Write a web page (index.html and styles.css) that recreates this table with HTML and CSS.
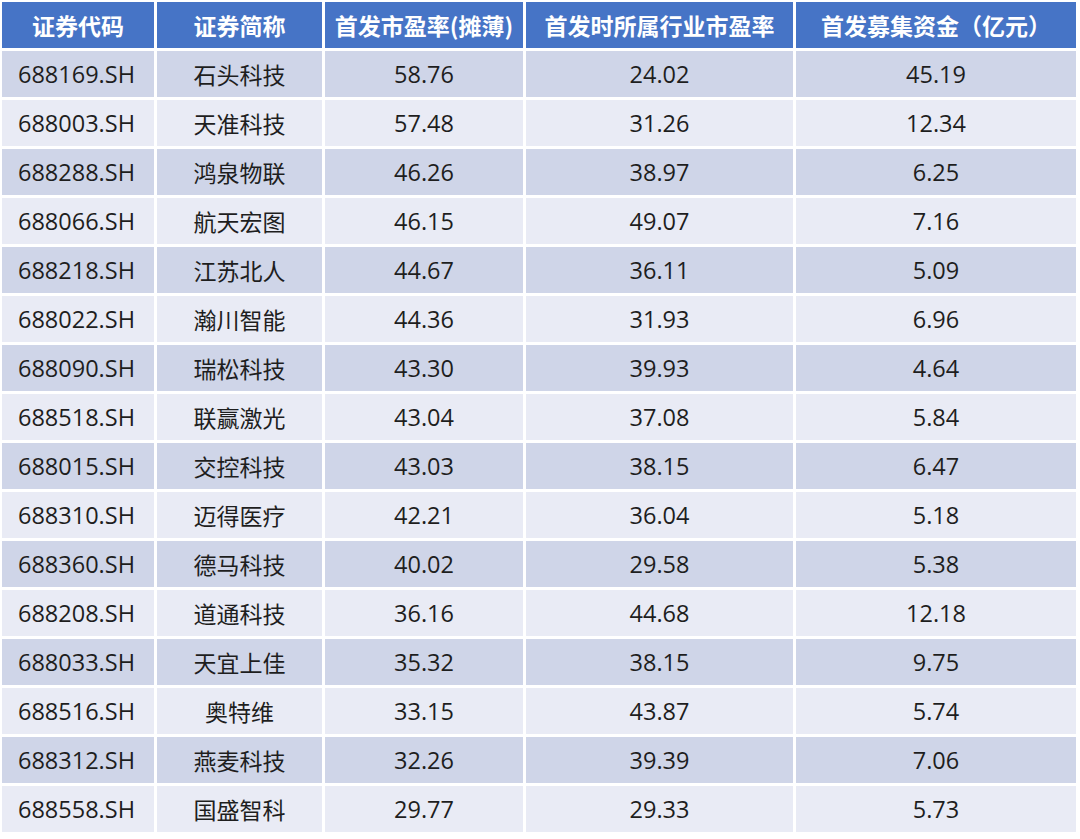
FILE: index.html
```html
<!DOCTYPE html>
<html lang="zh">
<head>
<meta charset="utf-8">
<link rel="stylesheet" href="styles.css">
</head>
<body>
<table class="ipo">
<colgroup>
<col class="c1"><col class="c2"><col class="c3"><col class="c4"><col class="c5">
</colgroup>
<thead>
<tr><th>证券代码</th><th>证券简称</th><th>首发市盈率(摊薄)</th><th>首发时所属行业市盈率</th><th>首发募集资金（亿元）</th></tr>
</thead>
<tbody>
<tr><td class="code">688169.SH</td><td>石头科技</td><td>58.76</td><td>24.02</td><td>45.19</td></tr>
<tr><td class="code">688003.SH</td><td>天准科技</td><td>57.48</td><td>31.26</td><td>12.34</td></tr>
<tr><td class="code">688288.SH</td><td>鸿泉物联</td><td>46.26</td><td>38.97</td><td>6.25</td></tr>
<tr><td class="code">688066.SH</td><td>航天宏图</td><td>46.15</td><td>49.07</td><td>7.16</td></tr>
<tr><td class="code">688218.SH</td><td>江苏北人</td><td>44.67</td><td>36.11</td><td>5.09</td></tr>
<tr><td class="code">688022.SH</td><td>瀚川智能</td><td>44.36</td><td>31.93</td><td>6.96</td></tr>
<tr><td class="code">688090.SH</td><td>瑞松科技</td><td>43.30</td><td>39.93</td><td>4.64</td></tr>
<tr><td class="code">688518.SH</td><td>联赢激光</td><td>43.04</td><td>37.08</td><td>5.84</td></tr>
<tr><td class="code">688015.SH</td><td>交控科技</td><td>43.03</td><td>38.15</td><td>6.47</td></tr>
<tr><td class="code">688310.SH</td><td>迈得医疗</td><td>42.21</td><td>36.04</td><td>5.18</td></tr>
<tr><td class="code">688360.SH</td><td>德马科技</td><td>40.02</td><td>29.58</td><td>5.38</td></tr>
<tr><td class="code">688208.SH</td><td>道通科技</td><td>36.16</td><td>44.68</td><td>12.18</td></tr>
<tr><td class="code">688033.SH</td><td>天宜上佳</td><td>35.32</td><td>38.15</td><td>9.75</td></tr>
<tr><td class="code">688516.SH</td><td>奥特维</td><td>33.15</td><td>43.87</td><td>5.74</td></tr>
<tr><td class="code">688312.SH</td><td>燕麦科技</td><td>32.26</td><td>39.39</td><td>7.06</td></tr>
<tr><td class="code">688558.SH</td><td>国盛智科</td><td>29.77</td><td>29.33</td><td>5.73</td></tr>
</tbody>
</table>
</body>
</html>
```
FILE: styles.css
```css
html, body {
  margin: 0;
  padding: 0;
  background: #ffffff;
}
.ipo {
  border-collapse: separate;
  border-spacing: 3px;
  margin: -1px 0 0 -1px;
  table-layout: fixed;
  width: 1079px;
  font-family: "Open Sans", "Noto Sans CJK SC", sans-serif;
}
.c1 { width: 152px; }
.c2 { width: 165px; }
.c3 { width: 198px; }
.c4 { width: 267px; }
.c5 { width: 280px; }
.ipo th {
  height: 46px;
  padding: 0;
  background: #4674c6;
  color: #ffffff;
  font-family: "Noto Sans CJK SC", sans-serif;
  font-weight: 700;
  font-size: 23px;
  text-align: center;
  vertical-align: middle;
  white-space: nowrap;
}
.ipo td {
  height: 46px;
  padding: 0;
  color: #1e1e1e;
  font-size: 23.5px;
  text-align: center;
  vertical-align: middle;
  white-space: nowrap;
}
.ipo td:nth-child(2) {
  font-family: "Noto Sans CJK SC", sans-serif;
  font-size: 23px;
}
.ipo td.code {
  text-align: left;
  padding-left: 16px;
}
.ipo tbody tr:nth-child(odd) td { background: #cfd5e8; }
.ipo tbody tr:nth-child(even) td { background: #e9ebf5; }
```
